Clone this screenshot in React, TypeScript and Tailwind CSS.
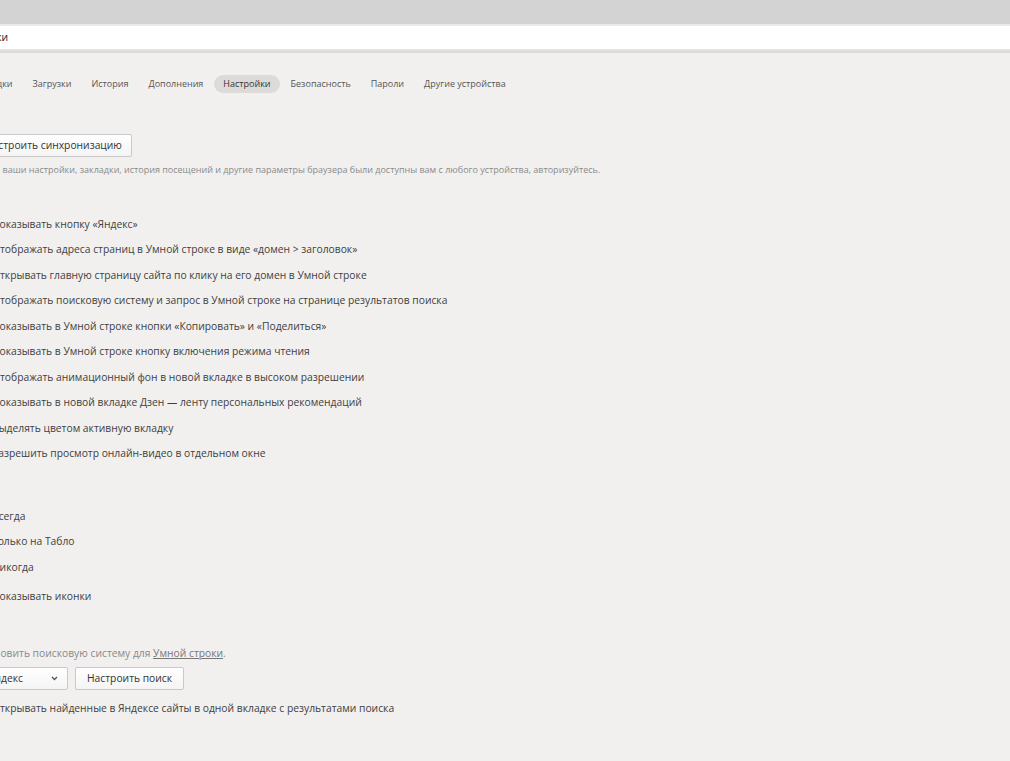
import React from "react";

const font = { fontFamily: '"Open Sans", "Noto Sans", sans-serif' };

const tabs = [
  "Закладки",
  "Загрузки",
  "История",
  "Дополнения",
  "Настройки",
  "Безопасность",
  "Пароли",
  "Другие устройства",
];

const viewOptions = [
  "Показывать кнопку «Яндекс»",
  "Отображать адреса страниц в Умной строке в виде «домен > заголовок»",
  "Открывать главную страницу сайта по клику на его домен в Умной строке",
  "Отображать поисковую систему и запрос в Умной строке на странице результатов поиска",
  "Показывать в Умной строке кнопки «Копировать» и «Поделиться»",
  "Показывать в Умной строке кнопку включения режима чтения",
  "Отображать анимационный фон в новой вкладке в высоком разрешении",
  "Показывать в новой вкладке Дзен — ленту персональных рекомендаций",
  "Выделять цветом активную вкладку",
  "Разрешить просмотр онлайн-видео в отдельном окне",
];

function Row({ children }: { children: React.ReactNode }) {
  return (
    <div className="h-[25.5px] flex items-center text-[10.3px] text-[#404040] whitespace-nowrap">
      {children}
    </div>
  );
}

export default function App() {
  return (
    <div
      className="w-[1010px] h-[761px] overflow-hidden bg-[#f1f0ef] flex flex-col"
      style={font}
    >
      {/* window top */}
      <div className="h-[24px] bg-[#d3d3d3] shrink-0" />
      <div className="h-[2px] bg-[#e9e9e9] shrink-0" />
      <div className="h-[23px] bg-white flex items-center shrink-0">
        <span className="-ml-[46px] mt-[1px] text-[10.3px] text-[#222]">Настройки</span>
      </div>
      <div className="h-[2px] bg-[#e2e2e2] shrink-0" />
      <div className="h-[2px] bg-[#d9d9d9] shrink-0" />

      {/* tabs */}
      <div className="mt-[22px] flex items-center gap-[2px] -ml-[37px] text-[9px] text-[#555] whitespace-nowrap">
        {tabs.map((t) => (
          <span
            key={t}
            className={
              t === "Настройки"
                ? "px-[9px] h-[18px] leading-[18px] rounded-full bg-[#dcdbda] text-[#333]"
                : "px-[9px] h-[18px] leading-[18px]"
            }
          >
            {t}
          </span>
        ))}
      </div>

      {/* sync */}
      <div className="mt-[41px] -ml-[25px] flex">
        <button className="h-[23px] px-[9px] border border-[#c9c9c9] rounded-[2px] bg-gradient-to-b from-white to-[#f4f4f4] text-[10.3px] text-[#333] whitespace-nowrap">
          Настроить синхронизацию
        </button>
      </div>
      <div className="mt-[6px] -ml-[28px] text-[9px] text-[#8a8a8a] whitespace-nowrap">
        Чтобы ваши настройки, закладки, история посещений и другие параметры браузера были доступны вам с любого устройства, авторизуйтесь.
      </div>

      {/* view options */}
      <div className="mt-[35px] -ml-[8px] flex flex-col">
        {viewOptions.map((o) => (
          <Row key={o}>{o}</Row>
        ))}
      </div>

      {/* radios */}
      <div className="mt-[37px] -ml-[8px] flex flex-col">
        <Row>Всегда</Row>
        <Row>Только на Табло</Row>
        <Row>Никогда</Row>
        <div className="h-[4px]" />
        <Row>Показывать иконки</Row>
      </div>

      {/* search */}
      <div className="mt-[36px] -ml-[28px] text-[10.3px] text-[#8a8a8a] whitespace-nowrap">
        Установить поисковую систему для{" "}
        <span className="underline text-[#777]">Умной строки</span>.
      </div>
      <div className="mt-[6px] -ml-[21px] flex gap-[7px]">
        <div className="w-[89px] h-[23px] border border-[#c9c9c9] rounded-[2px] bg-gradient-to-b from-white to-[#f4f4f4] flex items-center justify-between pl-[8px] pr-[9px] text-[10.3px] text-[#333]">
          <span>Яндекс</span>
          <svg width="7" height="5" viewBox="0 0 7 5">
            <path d="M1 1 L3.5 3.5 L6 1" fill="none" stroke="#555" strokeWidth="1.3" />
          </svg>
        </div>
        <button className="h-[23px] px-[11px] border border-[#c9c9c9] rounded-[2px] bg-gradient-to-b from-white to-[#f4f4f4] text-[10.3px] text-[#333] whitespace-nowrap">
          Настроить поиск
        </button>
      </div>
      <div className="mt-[6px] -ml-[8px] flex flex-col">
        <Row>Открывать найденные в Яндексе сайты в одной вкладке с результатами поиска</Row>
      </div>
    </div>
  );
}
